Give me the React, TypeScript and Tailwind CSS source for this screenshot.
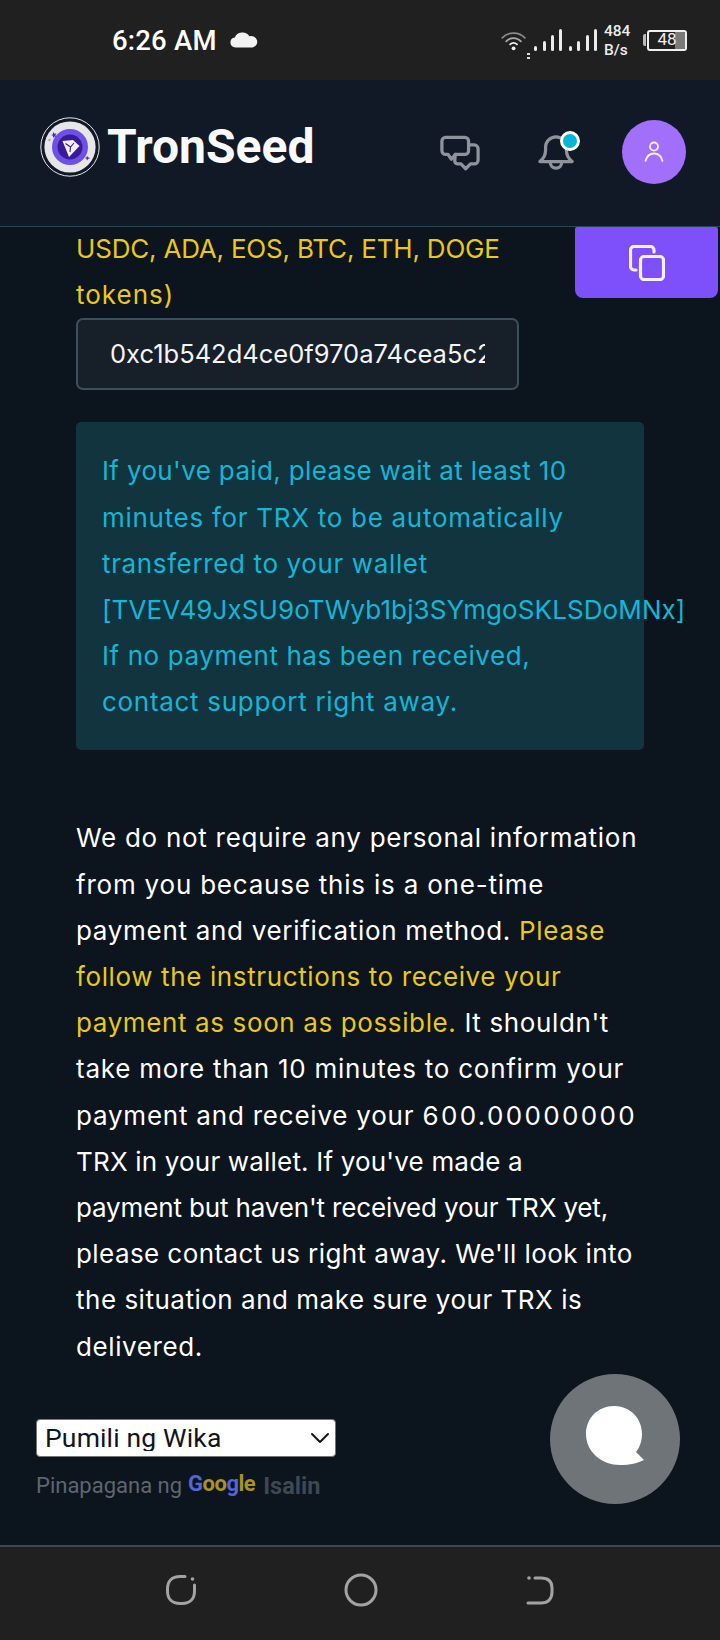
import { ChevronDown } from "lucide-react"

function Logo() {
  return (
    <svg width="60" height="60" viewBox="0 0 60 60" className="shrink-0">
      <circle cx="30" cy="30" r="29.2" fill="#111926" stroke="#e5e7eb" strokeWidth="1" />
      <circle cx="30" cy="30" r="25.6" fill="#e6e6ea" />
      <circle cx="30" cy="30" r="18" fill="#6d50e6" />
      <circle cx="30" cy="30" r="12.5" fill="#3a1a96" />
      <path d="M22.5 24 L33 23 L39.5 29 L29 40 Z" fill="#f2f0fa" />
      <path d="M25.5 26.5 L30.5 30 L34 26 M30.5 30 L30 35" stroke="#3a1a96" strokeWidth="1.1" fill="none" />
      <path d="M13 15 l1.6 1.8 1.8 -.4 -1 1.8 1 1.8 -1.8 -.6 -1.6 1.6 0 -2.2 -1.8 -.8 1.8 -.8 z" fill="#4c2bb8" />
      <path d="M47 39 l1.4 1.6 1.8 .4 -1.8 .8 -1.4 1.8 -.6 -2 -1.8 -.6 1.8 -.6 z" fill="#4c2bb8" />
      <circle cx="9.5" cy="23" r="1.2" fill="#a9a6c4" />
    </svg>
  )
}

function SignalBars({ heights }: { heights: number[] }) {
  return (
    <div className="flex items-end gap-[5.3px] h-[22px]">
      {heights.map((h, i) => (
        <div key={i} className="w-[3px] rounded-[1.5px] bg-[#ececec]" style={{ height: h }} />
      ))}
    </div>
  )
}

function StatusBar() {
  return (
    <div className="h-20 shrink-0 bg-[#202020] flex items-center text-white">
      <span className="ml-[112px] mt-[2px] text-[27.5px] font-medium font-['Roboto',sans-serif] tracking-[0.2px]">6:26 AM</span>
      <svg width="30" height="16" viewBox="0 0 28 16" preserveAspectRatio="none" className="ml-3">
        <path d="M6 15.5 a5 5 0 0 1 -.6 -9.9 A7.5 7.5 0 0 1 19 4.2 a5.7 5.7 0 0 1 3 11.3 Z" fill="#f3f3f3" />
      </svg>
      <div className="ml-auto mr-[33px] flex items-center">
        <svg width="26" height="23" viewBox="0 0 30 24" fill="none" strokeLinecap="round">
          <path d="M1.5 9 C8 1.5 21 1.5 27.5 9" stroke="#8a8a8a" strokeWidth="2" />
          <path d="M6 13 C10.5 8 18.5 8 23 13" stroke="#a8a8a8" strokeWidth="2" />
          <path d="M10.5 16.5 C13 14 16 14 18.5 16.5" stroke="#f0f0f0" strokeWidth="2" />
          <circle cx="14.5" cy="21" r="2.2" fill="#f0f0f0" />
        </svg>
        <div className="mr-[4px] flex flex-col gap-[2px] self-end mb-[1px]">
          <div className="w-[3px] h-[2px] bg-[#ddd]" />
          <div className="w-[3px] h-[2px] bg-[#ddd]" />
        </div>
        <SignalBars heights={[5, 10, 16, 22]} />
        <div className="w-[7px]" />
        <SignalBars heights={[5, 10, 16, 22]} />
        <div className="ml-[7px] mt-[2px] w-[34px] flex flex-col items-start text-[15.5px] leading-[19px] font-medium font-['Roboto',sans-serif] text-[#ececec]">
          <span>484</span>
          <span>B/s</span>
        </div>
        <div className="ml-[5px] flex items-center">
          <div className="w-[3px] h-[12px] bg-[#bbb] rounded-l-[2px]" />
          <div className="ml-[1px] relative w-[40px] h-[21px] rounded-[3px] border-2 border-[#f0f0f0] flex items-center justify-center overflow-hidden">
            <div className="absolute right-0 top-0 bottom-0 w-[10px] bg-[#7a7a7a]" />
            <span className="relative text-[17px] font-['Roboto',sans-serif] text-[#eee]">48</span>
          </div>
        </div>
      </div>
    </div>
  )
}

function Header() {
  return (
    <div className="h-[147px] shrink-0 bg-[#111926] border-b border-[#2c4552] flex items-center pl-10 pr-[34px]">
      <div className="flex items-center mb-3">
        <Logo />
        <span className="ml-[7px] text-[48px] leading-none font-bold font-['Roboto',sans-serif] text-[#f8f9fb]">TronSeed</span>
      </div>
      <div className="ml-auto flex items-center">
        <svg width="40" height="37" viewBox="0 0 42 38" fill="none" stroke="#8f949c" strokeWidth="3.4" strokeLinejoin="round" strokeLinecap="round">
          <path d="M6 2 H26 a4 4 0 0 1 4 4 V16 a4 4 0 0 1 -4 4 H16 L12 25 L8.5 20 H6 a4 4 0 0 1 -4 -4 V6 a4 4 0 0 1 4 -4 Z" />
          <path d="M31 10 H36 a4 4 0 0 1 4 4 V26 a4 4 0 0 1 -4 4 H32 L27 35 L22 30 H19 a4 4 0 0 1 -3.5 -2.5 L16 20" />
        </svg>
        <div className="relative ml-[58px]">
          <svg width="36" height="38" viewBox="0 0 38 40" fill="none" stroke="#8f949c" strokeWidth="3.4" strokeLinejoin="round" strokeLinecap="round">
            <path d="M2 29 Q8 24 8 17 V14 a11 11 0 0 1 22 0 V17 Q30 24 36 29 Z" />
            <path d="M13 30 a6 6 0 0 0 12 0" />
          </svg>
          <div className="absolute -top-[3px] -right-[6px] w-5 h-5 rounded-full bg-[#06b6d4] border-[3px] border-white" />
        </div>
        <div className="ml-[48px] -mt-[2px] w-16 h-16 rounded-full bg-[#a26ffb] flex items-center justify-center">
          <svg width="20" height="22" viewBox="0 0 20 22" fill="none" stroke="#f5f0ff" strokeWidth="1.8" strokeLinecap="round">
            <circle cx="10" cy="5.5" r="4" />
            <path d="M1.5 20 C3 14 7 12.5 10 12.5 C13 12.5 17 14 18.5 20" />
          </svg>
        </div>
      </div>
    </div>
  )
}

function Content() {
  return (
    <div className="relative flex-1 min-h-0 bg-[#0c141e] font-['Inter',sans-serif] text-[26px] leading-[46.2px] pl-[76px] pr-[36px]">
      <div className="text-[#e9c915] -mt-[1px]">
        <span className="tracking-[-0.2px]">USDC, ADA, EOS, BTC, ETH, DOGE</span><br />
        <span className="tracking-[1px]">tokens)</span>
      </div>
      <div className="w-[443px] h-[72px] rounded-[7px] border-2 border-[#3e4f5c] bg-[#171f29] flex items-center px-[32px] text-[25.5px] text-[#f3f4f6] whitespace-nowrap">
        <span className="block w-full overflow-hidden">0xc1b542d4ce0f970a74cea5c2</span>
      </div>
      <div className="mt-[32px] w-[568px] h-[328px] rounded-[5px] bg-[#12343f] pl-[26px] pt-[26px] text-[#12b6d6] whitespace-nowrap">
        <span className="tracking-[0.35px]">If you've paid, please wait at least 10</span><br />
        <span className="tracking-[0.71px]">minutes for TRX to be automatically</span><br />
        <span className="tracking-[0.63px]">transferred to your wallet</span><br />
        <span className="tracking-[0.1px]">[TVEV49JxSU9oTWyb1bj3SYmgoSKLSDoMNx]</span><br />
        <span className="tracking-[0.58px]">If no payment has been received,</span><br />
        <span className="tracking-[0.7px]">contact support right away.</span>
      </div>
      <div className="mt-[65px] text-white whitespace-nowrap">
        <span className="tracking-[0.72px]">We do not require any personal information</span><br />
        <span className="tracking-[0.79px]">from you because this is a one-time</span><br />
        <span className="tracking-[0.7px]">payment and verification method. <span className="text-[#e9c915]">Please</span></span><br />
        <span className="tracking-[0.62px] text-[#e9c915]">follow the instructions to receive your</span><br />
        <span className="tracking-[0.62px]"><span className="text-[#e9c915]">payment as soon as possible.</span> It shouldn't</span><br />
        <span className="tracking-[0.75px]">take more than 10 minutes to confirm your</span><br />
        <span className="tracking-[0.78px]">payment and receive your <span className="tracking-[2.37px]">600.00000000</span></span><br />
        <span className="tracking-[0.18px]">TRX in your wallet. If you've made a</span><br />
        <span className="tracking-[-0.15px]">payment but haven't received your TRX yet,</span><br />
        <span className="tracking-[0.42px]">please contact us right away. We'll look into</span><br />
        <span className="tracking-[0.51px]">the situation and make sure your TRX is</span><br />
        <span className="tracking-[0.6px]">delivered.</span>
      </div>
      <div className="-ml-[40px] mt-[49px] w-[300px] font-['Roboto',sans-serif]">
        <div className="relative">
          <select className="block w-full h-[38px] appearance-none rounded-[4px] border border-[#767676] bg-white pl-[8px] text-[26.5px] tracking-[0.15px] leading-none text-[#10151c] font-['Roboto',sans-serif]">
            <option>Pumili ng Wika</option>
          </select>
          <ChevronDown className="absolute right-0 top-[3px] text-[#10151c] pointer-events-none" size={32} strokeWidth={1.5} />
        </div>
        <div className="mt-[16px] flex items-center text-[22px] leading-[26px] text-[#5f666e] whitespace-nowrap">
          <span>Pinapagana ng</span>
          <span className="ml-[6px] -mt-[4px] font-bold text-[22px] tracking-[-0.5px]">
            <span className="text-[#5365d8]">G</span>
            <span className="text-[#a8941c]">oo</span>
            <span className="text-[#5365d8]">g</span>
            <span className="text-[#a8941c]">le</span>
          </span>
          <span className="ml-2 font-bold text-[23.5px] text-[#3d4853]">Isalin</span>
        </div>
      </div>
      {/* copy button hangs over the scrolled text */}
      <div className="absolute top-0 right-[2px] w-[143px] h-[71px] rounded-b-[8px] rounded-t-[2px] bg-[#7e50fb] flex items-center justify-center">
        <svg width="36" height="36" viewBox="0 0 36 36" fill="none" stroke="#f4f0ff" strokeWidth="3.2" strokeLinecap="round" strokeLinejoin="round">
          <rect x="11.5" y="11.5" width="23" height="23" rx="3.5" />
          <path d="M7 25 H5 a3.5 3.5 0 0 1 -3.5 -3.5 V5 A3.5 3.5 0 0 1 5 1.5 H21.5 A3.5 3.5 0 0 1 25 5 V7" />
        </svg>
      </div>
      {/* chat bubble */}
      <div className="absolute left-[550px] bottom-[41px] w-[130px] h-[130px] rounded-full bg-[#6e7478] flex items-center justify-center">
        <svg width="60" height="60" viewBox="0 0 60 60" className="ml-[1px] mt-[-6px]">
          <path d="M28 0 C44 0 56 12 56 28 C56 34 54 41 50 46 L58 54 C52 57 44 59 34 59 C16 59 0 46 0 28 C0 12 12 0 28 0 Z" fill="#ffffff" />
        </svg>
      </div>
    </div>
  )
}

function NavBar() {
  return (
    <div className="h-[95px] shrink-0 bg-[#202020] border-t-2 border-[#3c4a4d]">
      <div className="flex items-center justify-center h-full pb-[8px] gap-[148px]">
        <svg width="30" height="30" viewBox="0 0 30 30" fill="none" stroke="#a3a3a3" strokeWidth="3" strokeLinecap="round">
          <path d="M19 1.5 H14 C6 1.5 1.5 6 1.5 14 V16 C1.5 24 6 28.5 14 28.5 H16 C24 28.5 28.5 24 28.5 16 V10" />
          <circle cx="26.5" cy="4" r="1.8" fill="#a3a3a3" stroke="none" />
        </svg>
        <svg width="34" height="34" viewBox="0 0 34 34" fill="none" stroke="#a3a3a3" strokeWidth="3">
          <circle cx="17" cy="17" r="15" />
        </svg>
        <svg width="28" height="30" viewBox="0 0 28 30" fill="none" stroke="#a3a3a3" strokeWidth="3" strokeLinecap="round">
          <path d="M9 3 H15 C22 3 26 6 26 13 V17 C26 24 22 28 15 28 H2" />
          <circle cx="3" cy="3" r="1.8" fill="#a3a3a3" stroke="none" />
        </svg>
      </div>
    </div>
  )
}

export default function App() {
  return (
    <div className="w-[720px] h-[1640px] flex flex-col overflow-hidden">
      <StatusBar />
      <Header />
      <Content />
      <NavBar />
    </div>
  )
}
